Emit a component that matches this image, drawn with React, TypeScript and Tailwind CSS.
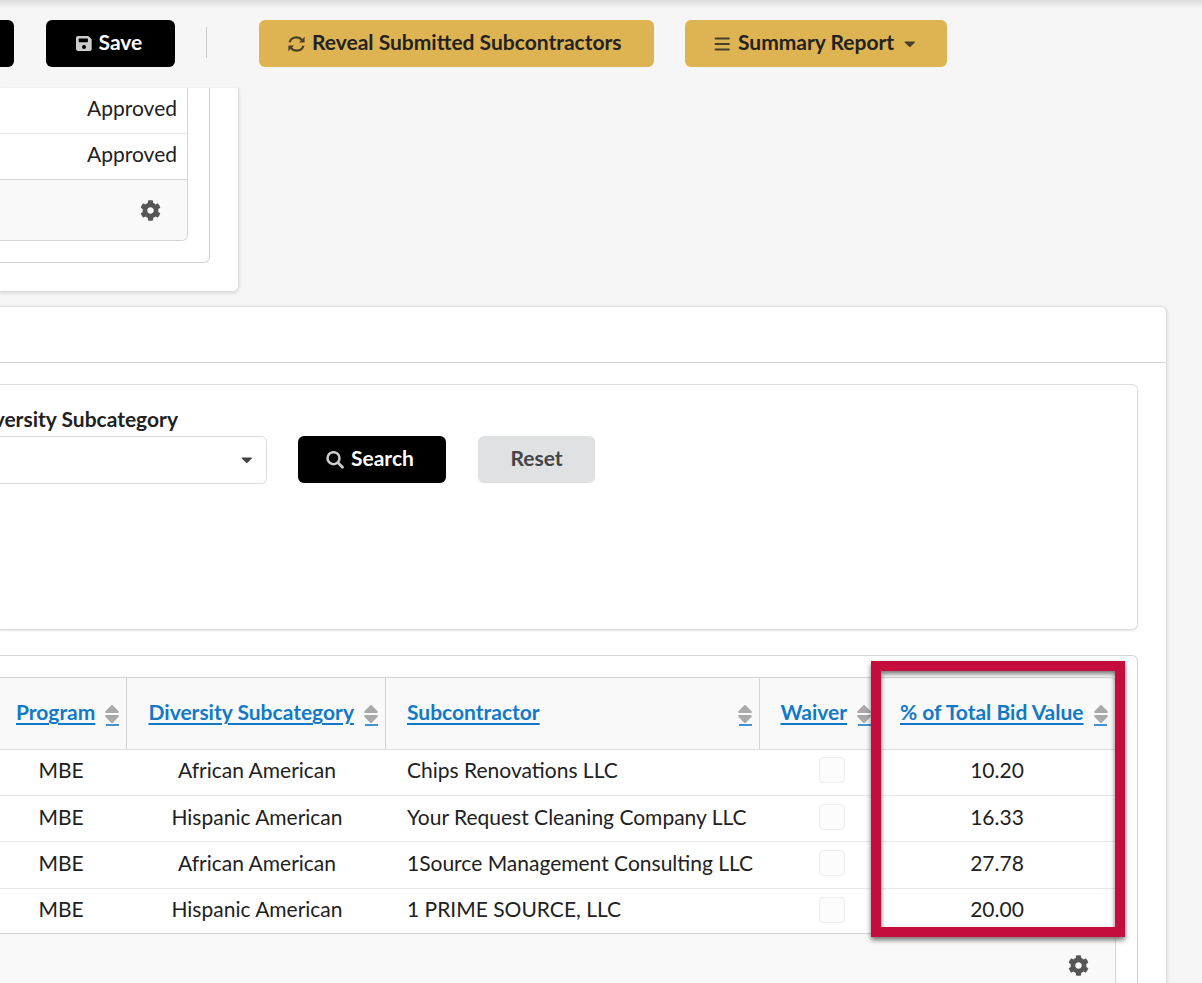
import React from 'react';
import { FaCog } from 'react-icons/fa';

const columns = [
  { label: 'Program', cell: 'w-[127px] pl-4', link: 'w-[79px]' },
  { label: 'Diversity Subcategory', cell: 'w-[259px] pl-[21.5px]', link: 'w-[205px]' },
  { label: 'Subcontractor', cell: 'w-[374px] pl-[21px]', link: 'w-[133px]' },
  { label: 'Waiver', cell: 'w-[119px] pl-[20.5px]', link: 'w-[67px]' },
  { label: '% of Total Bid Value', cell: 'w-[236px] pl-[21px]', link: 'w-[184px]' },
];

const rows = [
  { program: 'MBE', subcategory: 'African American', subcontractor: 'Chips Renovations LLC', value: '10.20', height: 'h-[46px] pb-1' },
  { program: 'MBE', subcategory: 'Hispanic American', subcontractor: 'Your Request Cleaning Company LLC', value: '16.33', height: 'h-[46px] pb-0.5' },
  { program: 'MBE', subcategory: 'African American', subcontractor: '1Source Management Consulting LLC', value: '27.78', height: 'h-[47px] pb-[3px]' },
  { program: 'MBE', subcategory: 'Hispanic American', subcontractor: '1 PRIME SOURCE, LLC', value: '20.00', height: 'h-[44px] pb-0.5' },
];

const CaretDown: React.FC<{ className?: string }> = ({ className }) => (
  <svg className={className} width="11.5" height="6.5" viewBox="0 0 12 7" fill="currentColor">
    <path d="M1 0.5h10c.6 0 .8.6.4 1L6.7 6.2c-.4.4-1 .4-1.4 0L.6 1.5C.2 1.1.4.5 1 .5z" />
  </svg>
);

const BarsIcon: React.FC = () => (
  <svg width="16" height="14" viewBox="0 0 16 14" stroke="currentColor" strokeWidth="1.8" strokeLinecap="round">
    <path d="M1.5 1.5h13.5M1.5 7h13.5M1.5 12.5h13.5" />
  </svg>
);

const SaveIcon: React.FC = () => (
  <svg className="mr-[7px] ml-[0.5px] opacity-80" width="16" height="15" viewBox="0 0 16 15" fill="currentColor" fillRule="evenodd">
    <path d="M2 0h9.8c.5 0 .9.2 1.2.5l2.2 2.2c.3.3.5.7.5 1.2V13c0 1.1-.8 2-1.9 2H2c-1.1 0-2-.9-2-2V2C0 .9.9 0 2 0zM3.2 2.6c-.3 0-.5.2-.5.5v2.700c0 .3.2.5.5.5h8.2c.3 0 .5-.2.5-.5V3.1c0-.3-.2-.5-.5-.5zM8 8.9a2 2 0 1 0 0 4a2 2 0 1 0 0-4z" />
  </svg>
);

const RefreshIcon: React.FC = () => (
  <svg className="mr-[7px] opacity-80" width="17" height="16" viewBox="0 0 17 16">
    <path d="M1.6 6.3A7 6.5 0 0 1 14 4M15.4 9.7A7 6.5 0 0 1 3 12" fill="none" stroke="currentColor" strokeWidth="2.2" />
    <path d="M16.6.8v5.600h-5.600zM.4 15.2V9.600H6z" fill="currentColor" />
  </svg>
);

const SearchIcon: React.FC = () => (
  <svg className="mr-[7px] opacity-80" width="18" height="18" viewBox="0 0 18 18" fill="none" stroke="currentColor">
    <circle cx="7.5" cy="7.2" r="6" strokeWidth="2.5" />
    <path d="M12 11.8l4.500 4.500" strokeWidth="2.8" strokeLinecap="round" />
  </svg>
);

const SortIcon: React.FC = () => (
  <svg width="14" height="19" viewBox="0 0 14 19" fill="#aaa">
    <path d="M6.1.4c.5-.5 1.3-.5 1.8 0l5.500 5.700c.7.8.4 1.900-.7 1.900H1.300C.2 8-.1 6.900.6 6.100z" />
    <path d="M6.1 17.700c.5.5 1.3.5 1.8 0l5.500-5.700c.7-.8.4-1.900-.7-1.900H1.300c-1.100 0-1.400 1.100-.7 1.900z" />
  </svg>
);

const Toolbar: React.FC = () => (
  <header className="flex h-[88px] shrink-0 items-start bg-[linear-gradient(to_bottom,#dcdcdc_0,#f6f6f6_9px)] pt-5">
    <button className="h-[47px] w-[14px] rounded-r-md bg-black" aria-label="Back" />
    <button className="ml-8 flex h-[47px] w-[129px] items-center rounded-md bg-black pl-[29px] font-bold text-white">
      <SaveIcon />
      <span className="-mt-1">Save</span>
    </button>
    <div className="mt-[7px] ml-[31px] h-[31px] w-px bg-[#cacaca]" />
    <button className="ml-[52px] flex h-[47px] w-[395px] items-center rounded-md bg-[#deb453] pl-[29px] font-bold text-[#222]">
      <RefreshIcon />
      <span className="-mt-1">Reveal Submitted Subcontractors</span>
    </button>
    <button className="ml-[31px] flex h-[47px] w-[262px] items-center rounded-md bg-[#deb453] pl-[29px] font-bold text-[#222]">
      <span className="mr-2 opacity-80"><BarsIcon /></span>
      <span className="-mt-1">Summary Report</span>
      <CaretDown className="mt-0.5 ml-[10px] opacity-80" />
    </button>
  </header>
);

const ApprovalCard: React.FC = () => (
  <section className="h-[204px] w-[239px] shrink-0 rounded-br-md border-r border-b border-[#dcdddd] bg-white shadow-[0_1px_3px_rgba(34,36,38,0.15)]">
    <div className="h-[175px] w-[210px] rounded-br-md border-r border-b border-[#d4d4d5]">
      <div className="flex h-[153px] w-[188px] flex-col overflow-hidden rounded-br-md border-r border-b border-[#d4d4d5]">
        <div className="flex h-[46px] items-center justify-end border-b border-[#e8e8e9] pr-[10px] pb-[5px]">Approved</div>
        <div className="flex h-[46px] items-center justify-end border-b border-[#d4d4d5] pr-[10px] pb-[5px]">Approved</div>
        <div className="flex flex-1 items-center justify-end bg-[#f9f9f9] pr-[26px]">
          <FaCog className="size-[21px] text-[#555]" />
        </div>
      </div>
    </div>
  </section>
);

const FilterPanel: React.FC = () => (
  <div className="mt-[21px] flex h-[246px] w-[1138px] items-start rounded-r-md border-y border-r border-[#dcdddd] pt-[19px] shadow-[0_1px_2px_rgba(34,36,38,0.12)]">
    <div className="w-[267px]">
      <div className="flex h-8 w-[178px] justify-end font-bold whitespace-nowrap">Diversity Subcategory</div>
      <div className="flex h-[48px] items-center justify-end rounded-r-md border-y border-r border-[#dcdddd] pr-[14px]">
        <CaretDown className="text-[#444]" />
      </div>
    </div>
    <button className="mt-8 ml-[31px] flex h-[47px] w-[148px] items-center rounded-md bg-black pl-7 font-bold text-white">
      <SearchIcon />
      <span className="-mt-1">Search</span>
    </button>
    <button className="mt-8 ml-8 flex h-[47px] w-[117px] items-center justify-center rounded-md bg-[#e0e1e2] pb-1 font-bold text-[#444546]">
      Reset
    </button>
  </div>
);

const BidTable: React.FC = () => (
  <div className="relative mt-[25px] h-[340px] w-[1138px] rounded-tr-md border-t border-r border-[#d4d4d5] pt-[21px]">
    <div className="h-[320px] w-[1116px] overflow-hidden rounded-tr-md border-t border-r border-[#d4d4d5]">
      <div className="flex h-[72px] border-b border-[#e0e0e1] bg-[#f9f9f9]">
        {columns.map((col) => (
          <div
            key={col.label}
            className={`flex shrink-0 items-start justify-between border-r border-[#d4d4d5] pt-[19px] pr-[7.5px] text-[#1279c8] last:border-r-0 last:pr-2 ${col.cell}`}
          >
            <a className={`font-bold whitespace-nowrap underline decoration-2 underline-offset-[3px] ${col.link}`}>{col.label}</a>
            <span className="mt-2 flex w-[13px] flex-col items-center border-b-2 border-[#4593ce]">
              <SortIcon />
            </span>
          </div>
        ))}
      </div>
      {rows.map((row) => (
        <div key={row.subcontractor} className={`flex items-center border-b border-[#e8e8e9] nth-5:border-b-0 ${row.height}`}>
          <div className="w-[127px] pr-[5px] pb-0.5 text-center">{row.program}</div>
          <div className="w-[259px] pb-0.5 pl-px text-center">{row.subcategory}</div>
          <div className="w-[374px] pb-0.5 pl-[21px] whitespace-nowrap">{row.subcontractor}</div>
          <div className="w-[119px] pb-px pl-[59px]">
            <div className="size-[26px] rounded-[4px] border border-[#eeeeef] bg-[#fcfcfc]" />
          </div>
          <div className="w-[236px] pb-0.5 text-center">{row.value}</div>
        </div>
      ))}
      <div className="flex h-[64px] items-center justify-end border-t border-[#d4d4d5] bg-[#f9f9f9] pr-[26px] pb-px">
        <FaCog className="size-[21px] text-[#555]" />
      </div>
    </div>

    {/* Highlight around the bid value column */}
    <div className="absolute top-[5px] left-[871px] h-[276px] w-[254px] border-[10px] border-[#c40d3c] shadow-[0_3px_5px_rgba(0,0,0,0.55),inset_0_3px_5px_rgba(0,0,0,0.55)]" />
  </div>
);

export default function App() {
  return (
    <div className="flex h-[983px] w-[1202px] flex-col overflow-hidden bg-[#f5f5f5] font-['Lato',sans-serif] text-[21px] leading-[30px] text-[#212121]">
      <Toolbar />
      <ApprovalCard />
      <section className="mt-[14px] h-[700px] w-[1167px] shrink-0 rounded-tr-md border-t border-r border-[#dcdddd] bg-white shadow-[0_1px_3px_rgba(34,36,38,0.15)]">
        <div className="h-[56px] border-b border-[#d4d4d5]" />
        <FilterPanel />
        <BidTable />
      </section>
    </div>
  );
}
